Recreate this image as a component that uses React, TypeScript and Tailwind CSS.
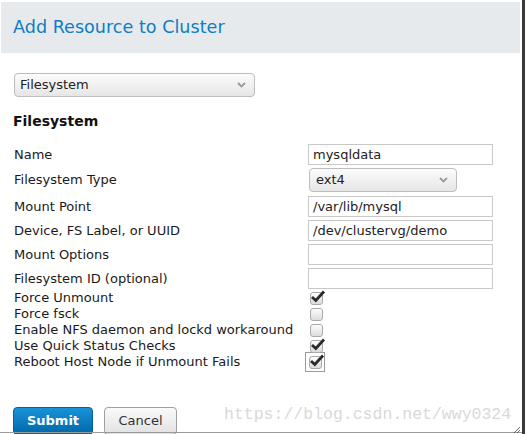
import React from "react";

const font = { fontFamily: '"DejaVu Sans", "Liberation Sans", sans-serif' };

function Chevron() {
  return (
    <svg width="9" height="6" viewBox="0 0 9 6" className="shrink-0">
      <path d="M1 1 L4.5 4.5 L8 1" fill="none" stroke="#9a9a9a" strokeWidth="1.8" />
    </svg>
  );
}

function Check({ checked, focus }: { checked: boolean; focus?: boolean }) {
  const box = (
    <div className="relative w-[13px] h-[13px] rounded-[3px] border border-[#a9a9a9] bg-gradient-to-b from-[#fdfdfd] to-[#dcdcdc]">
      {checked && (
        <svg width="16" height="14" viewBox="0 0 16 14" className="absolute left-[-1px] top-[-4px]">
          <path d="M2 8 L5.8 11.5 L14 2.5" fill="none" stroke="#2b2b2b" strokeWidth="2.8" />
        </svg>
      )}
    </div>
  );
  if (focus) {
    return (
      <div className="ml-[-5px] w-[20px] h-[20px] border border-[#9a9a9a] flex items-center justify-center shrink-0">
        {box}
      </div>
    );
  }
  return box;
}

function TextInput({ value }: { value: string }) {
  return (
    <div className="w-[185px] h-[21px] border border-[#c8c8c8] bg-white flex items-center px-[4px] text-[13px] text-[#222]">
      {value}
    </div>
  );
}

export default function App() {
  const rows: { label: string; h: string; mt: string; field: React.ReactNode }[] = [
    { label: "Name", h: "h-[21px]", mt: "mt-0", field: <TextInput value="mysqldata" /> },
    {
      label: "Filesystem Type",
      h: "h-[24px]",
      mt: "mt-[3px]",
      field: (
        <div className="ml-[1px] w-[148px] h-[24px] rounded-[4px] border border-[#bdbdbd] bg-gradient-to-b from-[#fcfcfc] to-[#e6e6e6] flex items-center justify-between pl-[6px] pr-[8px] text-[13px] text-[#222]">
          <span>ext4</span>
          <Chevron />
        </div>
      ),
    },
    { label: "Mount Point", h: "h-[21px]", mt: "mt-[4px]", field: <TextInput value="/var/lib/mysql" /> },
    { label: "Device, FS Label, or UUID", h: "h-[21px]", mt: "mt-[3px]", field: <TextInput value="/dev/clustervg/demo" /> },
    { label: "Mount Options", h: "h-[21px]", mt: "mt-[3px]", field: <TextInput value="" /> },
    { label: "Filesystem ID (optional)", h: "h-[21px]", mt: "mt-[3px]", field: <TextInput value="" /> },
  ];
  const checks = [
    { label: "Force Unmount", checked: true },
    { label: "Force fsck", checked: false },
    { label: "Enable NFS daemon and lockd workaround", checked: false },
    { label: "Use Quick Status Checks", checked: true },
    { label: "Reboot Host Node if Unmount Fails", checked: true, focus: true },
  ];

  return (
    <div className="w-[527px] h-[434px] bg-white flex items-start overflow-hidden" style={font}>
      <div className="w-[522px] flex flex-col relative shrink-0">
        <div className="shrink-0 mt-[2px] ml-[1px] w-[519px] h-[51px] bg-[#e7eaed] flex items-center pl-[12px]">
          <span className="text-[17.6px] text-[#0d7dc5]">Add Resource to Cluster</span>
        </div>

        <div className="shrink-0 pl-[14px] mt-[20px]">
          <div className="w-[241px] h-[24px] rounded-[4px] border border-[#bdbdbd] bg-gradient-to-b from-[#fcfcfc] to-[#e6e6e6] flex items-center justify-between pl-[5px] pr-[8px] text-[13px] text-[#222]">
            <span>Filesystem</span>
            <Chevron />
          </div>
        </div>

        <div className="shrink-0 pl-[13px] mt-[15px] text-[14px] font-bold text-[#111] leading-[18px]">Filesystem</div>

        <div className="shrink-0 pl-[14px] mt-[14px] flex flex-col text-[13px] text-[#1a1a1a]">
          {rows.map((r) => (
            <div key={r.label} className={`shrink-0 flex items-center ${r.h} ${r.mt}`}>
              <div className="w-[294px]">{r.label}</div>
              {r.field}
            </div>
          ))}
          <div className="shrink-0 mt-[1px] flex flex-col">
            {checks.map((c) => (
              <div key={c.label} className="shrink-0 flex items-center h-[16px]">
                <div className="w-[296px]">{c.label}</div>
                <Check checked={c.checked} focus={c.focus} />
              </div>
            ))}
          </div>
        </div>

        <div className="shrink-0 pl-[13px] mt-[37px] flex gap-[11px]">
          <div className="w-[80px] h-[28px] rounded-[4px] border border-[#0b5f99] bg-gradient-to-b from-[#1a92d8] to-[#0068ab] text-white font-bold text-[13px] flex items-center justify-center">
            Submit
          </div>
          <div className="w-[73px] h-[28px] rounded-[4px] border border-[#a0a0a0] bg-gradient-to-b from-[#fafafa] to-[#e2e2e2] text-[#333] text-[13px] flex items-center justify-center">
            Cancel
          </div>
        </div>

        <div
          className="absolute left-[224px] top-[405px] text-[16.5px] text-[#d9d9d9] leading-[20px]"
          style={{ fontFamily: '"Liberation Mono", monospace' }}
        >
          https://blog.csdn.net/wwy0324
        </div>
        <div className="absolute left-0 top-[432px] w-[522px] h-[1px] bg-[#9a9a9a]" />
        <svg width="6" height="6" viewBox="0 0 6 6" className="absolute left-[514px] top-[427px]">
          <path d="M0 6 L6 0 M3 6 L6 3" stroke="#444" strokeWidth="0.8" />
        </svg>
      </div>
      <div className="w-[3px] h-[434px] bg-[#3a3a3a] shrink-0" />
      <div className="w-[2px] h-[434px] bg-white shrink-0" />
    </div>
  );
}
